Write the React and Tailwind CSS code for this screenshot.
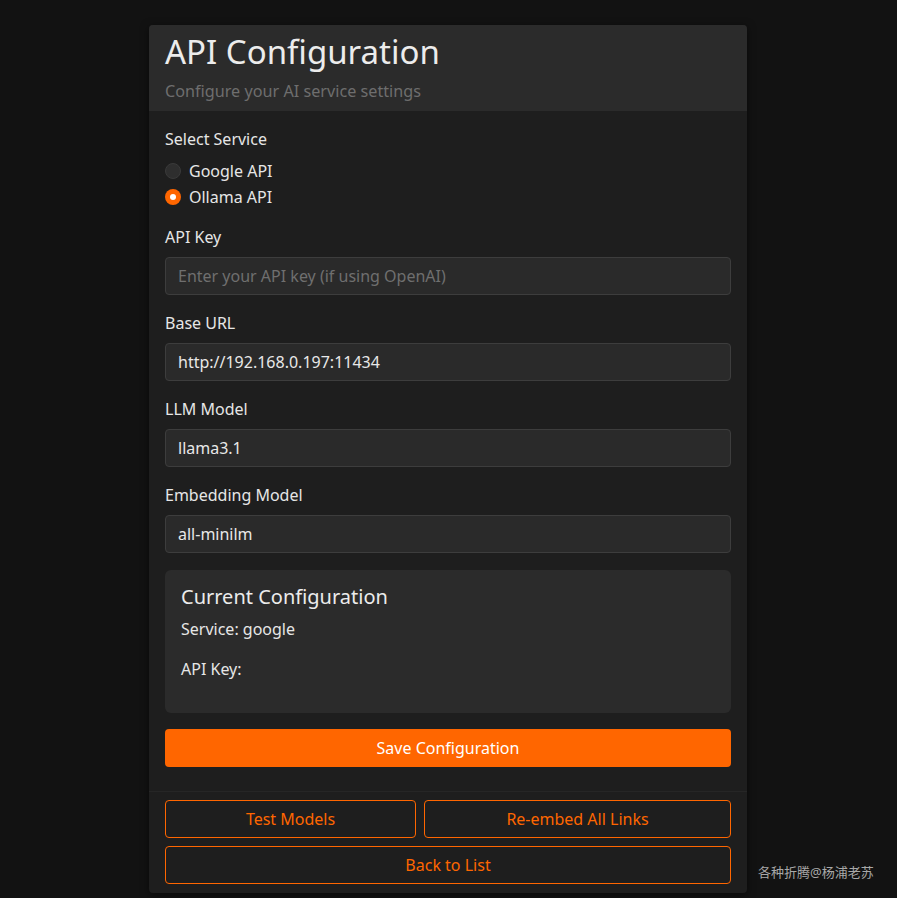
import React from "react";

const font = { fontFamily: '"Noto Sans", "Noto Sans CJK SC", sans-serif' };

function Field({ label, value, placeholder }) {
  return (
    <div className="flex flex-col gap-2 mb-4">
      <label className="text-[16px] leading-6 text-[#e6e6e6]">{label}</label>
      <input
        readOnly
        value={value || ""}
        placeholder={placeholder}
        className="h-[38px] w-full rounded-[4px] border border-[#3d3d3d] bg-[#2a2a2a] px-3 text-[16px] text-[#e8e8e8] placeholder:text-[#6f6f6f] outline-none"
      />
    </div>
  );
}

function Radio({ checked, label }) {
  return (
    <div className="flex items-center gap-2 h-6">
      {checked ? (
        <span className="flex h-4 w-4 items-center justify-center rounded-full bg-[#ff6600]">
          <span className="h-[6px] w-[6px] rounded-full bg-white" />
        </span>
      ) : (
        <span className="h-4 w-4 rounded-full border border-[#3a3a3a] bg-[#2e2e2e]" />
      )}
      <span className="text-[16px] text-[#e6e6e6]">{label}</span>
    </div>
  );
}

export default function App() {
  return (
    <div className="relative min-h-[898px] w-full bg-[#121212] pt-[25px]" style={font}>
      <div className="ml-[149px] w-[598px] overflow-hidden rounded-[4px] bg-[#1e1e1e] shadow-[0_2px_8px_rgba(0,0,0,0.5)]">
        <div className="bg-[#2b2b2b] px-4 py-2">
          <h1 className="text-[33px] leading-[38px] text-[#ececec]">API Configuration</h1>
          <p className="mt-2 text-[16.2px] leading-6 text-[#6e6e6e]">Configure your AI service settings</p>
        </div>
        <div className="px-4 pt-4 pb-6">
          <div className="mb-4">
            <div className="text-[16px] leading-6 text-[#e6e6e6]">Select Service</div>
            <div className="mt-2 flex flex-col gap-[2px]">
              <Radio label="Google API" />
              <Radio checked label="Ollama API" />
            </div>
          </div>
          <Field label="API Key" placeholder="Enter your API key (if using OpenAI)" />
          <Field label="Base URL" value="http://192.168.0.197:11434" />
          <Field label="LLM Model" value="llama3.1" />
          <Field label="Embedding Model" value="all-minilm" />
          <div className="mt-[17px] rounded-[6px] bg-[#2b2b2b] px-4 pt-[15px] pb-[32px]">
            <h3 className="text-[20px] leading-6 text-[#ececec]">Current Configuration</h3>
            <p className="mt-2 text-[16px] leading-6 text-[#e6e6e6]">Service: google</p>
            <p className="mt-4 text-[16px] leading-6 text-[#e6e6e6]">API Key:</p>
          </div>
          <button className="mt-4 h-[38px] w-full rounded-[4px] bg-[#ff6600] text-[16px] text-white">
            Save Configuration
          </button>
        </div>
        <div className="border-t border-[#262626] px-4 pt-2 pb-[9px]">
          <div className="flex gap-2">
            <button className="h-[38px] w-[251px] rounded-[4px] border border-[#ff6600] text-[16px] text-[#ff6600]">
              Test Models
            </button>
            <button className="h-[38px] flex-1 rounded-[4px] border border-[#ff6600] text-[16px] text-[#ff6600]">
              Re-embed All Links
            </button>
          </div>
          <button className="mt-2 h-[38px] w-full rounded-[4px] border border-[#ff6600] text-[16px] text-[#ff6600]">
            Back to List
          </button>
        </div>
      </div>
      <div className="absolute left-[758px] top-[862px] text-[13px] leading-5 text-[#a8a8a8]">各种折腾@杨浦老苏</div>
    </div>
  );
}
